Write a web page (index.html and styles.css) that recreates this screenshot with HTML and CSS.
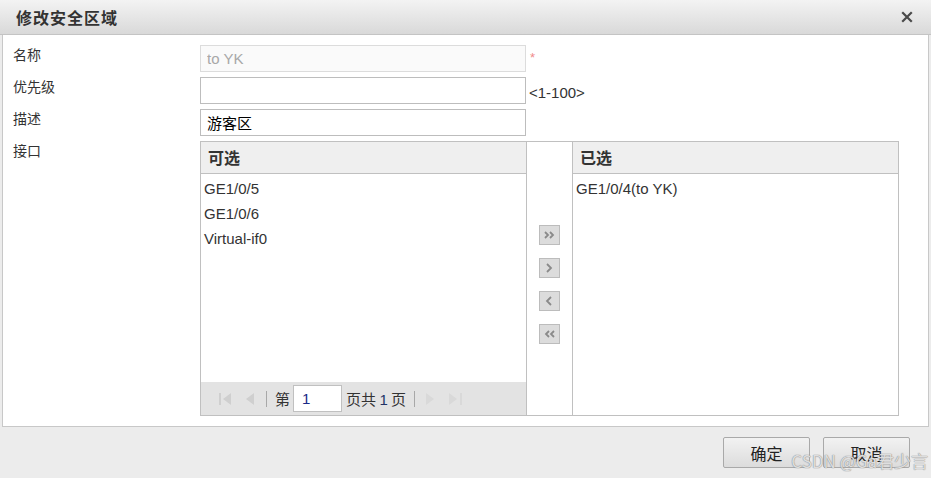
FILE: index.html
```html
<!DOCTYPE html>
<html lang="zh">
<head>
<meta charset="utf-8">
<title>修改安全区域</title>
<link rel="stylesheet" href="styles.css">
</head>
<body>
<div class="dialog">
  <div class="titlebar">
    <span class="title">修改安全区域</span>
    <svg class="close" width="12" height="12" viewBox="0 0 12 12"><path d="M2 2 L10 10 M10 2 L2 10" stroke="#4a4a4a" stroke-width="2.2" stroke-linecap="square"/></svg>
  </div>
  <div class="panel">
    <div class="form">
      <div class="label">名称</div>
      <div class="field"><input class="input input-disabled" value="to YK" disabled><span class="required">*</span></div>
      <div class="label">优先级</div>
      <div class="field"><input class="input"><span class="hint">&lt;1-100&gt;</span></div>
      <div class="label">描述</div>
      <div class="field"><input class="input input-cjk" value="游客区"></div>
      <div class="label">接口</div>
      <div class="transfer">
        <div class="list">
          <div class="list-head">可选</div>
          <div class="list-body">
            <div class="item">GE1/0/5</div>
            <div class="item">GE1/0/6</div>
            <div class="item">Virtual-if0</div>
          </div>
          <div class="pager">
            <svg class="pg pg-first" width="15" height="14" viewBox="0 0 15 14"><rect x="1" y="1" width="2" height="12" fill="#cfcfcf"/><path d="M13 1 L5 7 L13 13 Z" fill="#cfcfcf"/></svg>
            <svg class="pg pg-prev" width="10" height="14" viewBox="0 0 10 14"><path d="M9 1 L1 7 L9 13 Z" fill="#cfcfcf"/></svg>
            <span class="sep sep-left"></span>
            <span class="ptext">第</span>
            <input class="page-input" value="1">
            <span class="ptext">页共 <span class="num">1</span> 页</span>
            <span class="sep sep-right"></span>
            <svg class="pg pg-next" width="10" height="14" viewBox="0 0 10 14"><path d="M1 1 L9 7 L1 13 Z" fill="#d9d9d9"/></svg>
            <svg class="pg pg-last" width="15" height="14" viewBox="0 0 15 14"><path d="M1 1 L9 7 L1 13 Z" fill="#d9d9d9"/><rect x="12" y="1" width="2" height="12" fill="#d9d9d9"/></svg>
          </div>
        </div>
        <div class="mover">
          <button class="mbtn"><svg width="13" height="10" viewBox="0 0 13 10"><path d="M2 2 L5 5 L2 8 M7 2 L10 5 L7 8" fill="none" stroke="#8a8a8a" stroke-width="1.8"/></svg></button>
          <button class="mbtn"><svg width="13" height="12" viewBox="0 0 13 12"><path d="M4 2 L8 6 L4 10" fill="none" stroke="#8a8a8a" stroke-width="1.8"/></svg></button>
          <button class="mbtn"><svg width="13" height="12" viewBox="0 0 13 12"><path d="M8 2 L4 6 L8 10" fill="none" stroke="#8a8a8a" stroke-width="1.8"/></svg></button>
          <button class="mbtn"><svg width="13" height="10" viewBox="0 0 13 10"><path d="M6 2 L3 5 L6 8 M11 2 L8 5 L11 8" fill="none" stroke="#8a8a8a" stroke-width="1.8"/></svg></button>
        </div>
        <div class="list list-right">
          <div class="list-head">已选</div>
          <div class="list-body">
            <div class="item">GE1/0/4(to YK)</div>
          </div>
        </div>
      </div>
    </div>
  </div>
  <div class="footer">
    <button class="btn">确定</button>
    <button class="btn">取消</button>
    <span class="watermark">CSDN @Ga君少言</span>
  </div>
</div>
</body>
</html>
```
FILE: styles.css
```css
* { box-sizing: border-box; }
html, body { margin: 0; padding: 0; }
body {
  width: 931px;
  height: 478px;
  overflow: hidden;
  font-family: "Liberation Sans", Arial, "Noto Sans CJK SC", sans-serif;
  font-size: 15px;
  color: #333;
  background: #ececec;
}
.dialog {
  width: 931px;
  height: 478px;
  display: flex;
  flex-direction: column;
  position: relative;
}
.titlebar {
  height: 35px;
  flex: none;
  display: flex;
  align-items: center;
  justify-content: space-between;
  padding: 0 18px 1px 16px;
  background: linear-gradient(#f3f3f3, #d9d9d9);
  border-bottom: 1px solid #c4c4c4;
}
.title {
  font-family: "Noto Sans CJK SC", sans-serif;
  font-weight: bold;
  font-size: 16px;
  color: #333;
  letter-spacing: 1px;
}
.close { display: block; margin-top: 1px; }
.panel {
  height: 392px;
  flex: none;
  margin: 0 2px;
  background: #fff;
  border: 1px solid #c8c8c8;
  border-top: none;
  padding: 10px 0 0 10px;
}
.form {
  display: grid;
  grid-template-columns: 187px auto;
  row-gap: 5px;
}
.label {
  font-family: "Noto Sans CJK SC", sans-serif;
  font-size: 14px;
  line-height: 20px;
  margin-top: -1px;
  color: #333;
}
.field {
  display: flex;
  align-items: center;
  height: 27px;
}
.input {
  width: 326px;
  height: 27px;
  border: 1px solid #bdbdbd;
  background: #fff;
  padding: 0 6px;
  font-family: "Liberation Sans", Arial, "Noto Sans CJK SC", sans-serif;
  font-size: 15px;
  color: #000;
  outline: none;
  margin: 0;
}
.input-disabled {
  background: #fafafa;
  border-color: #dcdcdc;
  color: #a8a8a8;
}
.input-cjk { font-family: "Noto Sans CJK SC", sans-serif; font-size: 15px; }
.required {
  color: #f08a8a;
  font-size: 13px;
  margin-left: 4px;
  align-self: flex-start;
  margin-top: 5px;
}
.hint {
  margin-left: 3px;
  font-size: 15px;
  color: #333;
  margin-top: 4px;
}
.transfer {
  display: flex;
  width: 699px;
  height: 275px;
  border: 1px solid #c0c0c0;
}
.list {
  width: 326px;
  display: flex;
  flex-direction: column;
  border-right: 1px solid #c0c0c0;
}
.list-right {
  border-right: none;
  border-left: 1px solid #c0c0c0;
  width: 326px;
}
.list-head {
  height: 32px;
  flex: none;
  background: #efefef;
  border-bottom: 1px solid #c0c0c0;
  font-family: "Noto Sans CJK SC", sans-serif;
  font-weight: bold;
  font-size: 16px;
  line-height: 30px;
  padding-left: 7px;
  color: #333;
}
.list-body {
  flex: 1;
  padding: 4px 0 0 3px;
}
.item {
  height: 25px;
  line-height: 22px;
  font-size: 15px;
  color: #333;
}
.pager {
  height: 33px;
  flex: none;
  background: #e3e3e3;
  display: flex;
  align-items: center;
  padding-left: 17px;
}
.pg { display: block; }
.pg-first { margin-right: 12px; }
.pg-prev { margin-right: 11px; }
.pg-next { margin-left: 10px; margin-right: 13px; }
.sep {
  width: 1px;
  height: 16px;
  background: #a8a8a8;
}
.sep-left { margin-right: 8px; }
.sep-right { margin-left: 8px; }
.ptext {
  font-family: "Noto Sans CJK SC", sans-serif;
  font-size: 15px;
  color: #333;
}
.num { font-family: "Liberation Sans", Arial, sans-serif; color: #223366; }
.page-input {
  width: 49px;
  height: 27px;
  margin: 0 4px 0 3px;
  border: 1px solid #c0c0c0;
  background: #fff;
  font-family: "Liberation Sans", Arial, sans-serif;
  font-size: 15px;
  color: #1a2a88;
  padding: 0 0 0 8px;
  outline: none;
}
.mover {
  width: 45px;
  flex: none;
  display: flex;
  flex-direction: column;
  align-items: center;
  padding-top: 83px;
  gap: 13px;
}
.mbtn {
  width: 21px;
  height: 20px;
  padding: 0;
  margin: 0;
  border: 1px solid #bcbcbc;
  background: #dcdcdc;
  display: flex;
  align-items: center;
  justify-content: center;
}
.mbtn svg { display: block; }
.footer {
  flex: 1;
  display: flex;
  justify-content: flex-end;
  align-items: flex-start;
  padding: 10px 21px 0 0;
  gap: 13px;
  background: #ececec;
  position: relative;
}
.btn {
  width: 87px;
  height: 31px;
  margin: 0;
  border: 1px solid #a9a9a9;
  border-radius: 2px;
  background: linear-gradient(#f2f2f2, #dcdcdc);
  font-family: "Noto Sans CJK SC", sans-serif;
  font-size: 16px;
  color: #222;
  padding: 0;
}
.watermark {
  position: absolute;
  right: 3px;
  bottom: 5px;
  font-family: "Noto Sans CJK SC", sans-serif;
  font-size: 17px;
  color: rgba(250, 250, 250, 0.75);
  text-shadow: 0 0 1px #8a8a8a, 0 0 1px #8a8a8a;
  white-space: nowrap;
}
```
